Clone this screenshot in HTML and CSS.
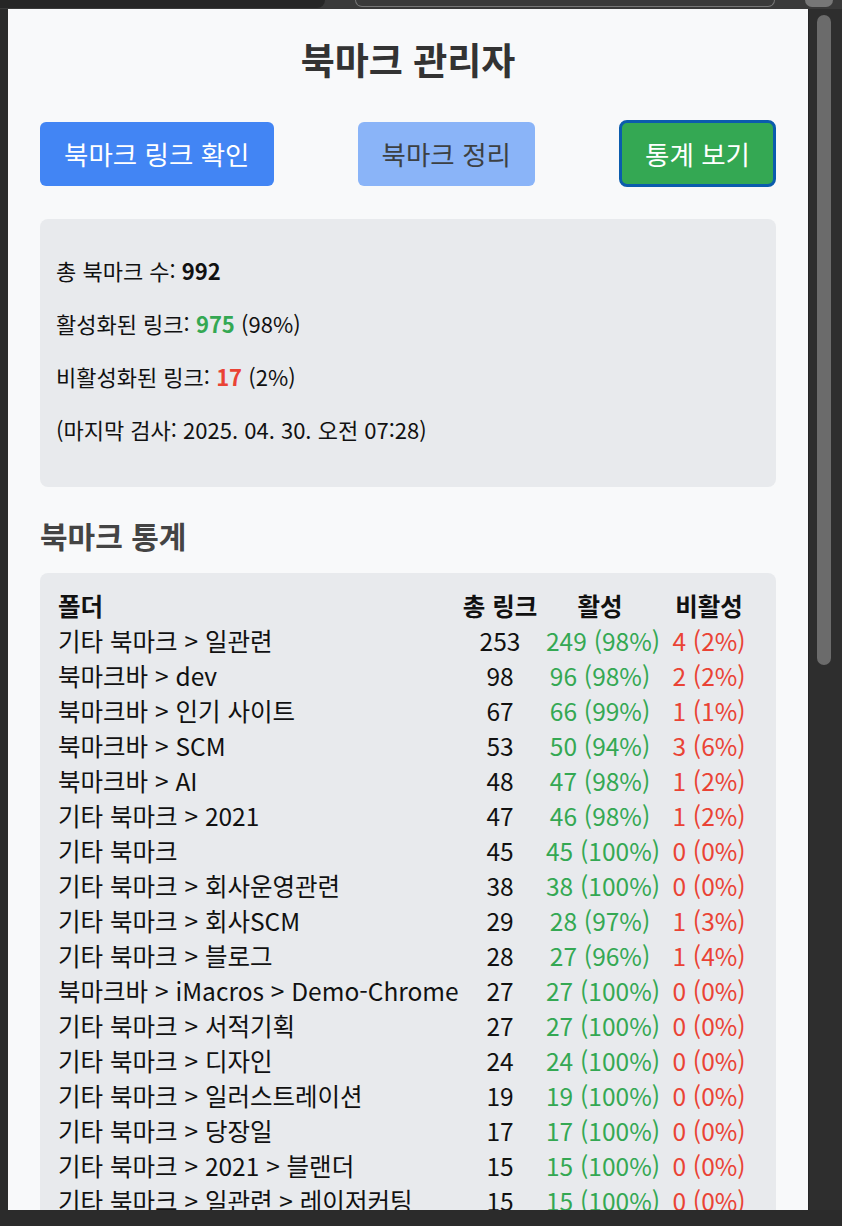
FILE: index.html
```html
<!DOCTYPE html>
<html lang="ko">
<head>
<meta charset="utf-8">
<title>북마크 관리자</title>
<link rel="stylesheet" href="styles.css">
</head>
<body>
<div class="window">
  <div class="topbar">
    <div class="tab-dark"></div>
    <div class="tab-outline"></div>
    <div class="avatar"></div>
  </div>
  <div class="main">
    <div class="gutter"></div>
    <div class="popup">
      <h1 class="title">북마크 관리자</h1>
      <div class="actions">
        <button class="btn btn-check">북마크 링크 확인</button>
        <button class="btn btn-clean">북마크 정리</button>
        <button class="btn btn-stats">통계 보기</button>
      </div>
      <div class="summary">
        <p>총 북마크 수: <strong>992</strong></p>
        <p>활성화된 링크: <strong class="ok">975</strong> (98%)</p>
        <p>비활성화된 링크: <strong class="bad">17</strong> (2%)</p>
        <p>(마지막 검사: 2025. 04. 30. 오전 07:28)</p>
      </div>
      <h2 class="section-title">북마크 통계</h2>
      <div class="stats-box">
        <table class="stats">
          <colgroup>
            <col class="c-folder"><col class="c-total"><col class="c-active"><col class="c-inactive">
          </colgroup>
          <thead>
            <tr><th class="folder">폴더</th><th>총 링크</th><th>활성</th><th>비활성</th></tr>
          </thead>
          <tbody>
            <tr><td class="folder">기타 북마크 &gt; 일관련</td><td>253</td><td class="ok">249 (98%)</td><td class="bad">4 (2%)</td></tr>
            <tr><td class="folder">북마크바 &gt; dev</td><td>98</td><td class="ok">96 (98%)</td><td class="bad">2 (2%)</td></tr>
            <tr><td class="folder">북마크바 &gt; 인기 사이트</td><td>67</td><td class="ok">66 (99%)</td><td class="bad">1 (1%)</td></tr>
            <tr><td class="folder">북마크바 &gt; SCM</td><td>53</td><td class="ok">50 (94%)</td><td class="bad">3 (6%)</td></tr>
            <tr><td class="folder">북마크바 &gt; AI</td><td>48</td><td class="ok">47 (98%)</td><td class="bad">1 (2%)</td></tr>
            <tr><td class="folder">기타 북마크 &gt; 2021</td><td>47</td><td class="ok">46 (98%)</td><td class="bad">1 (2%)</td></tr>
            <tr><td class="folder">기타 북마크</td><td>45</td><td class="ok">45 (100%)</td><td class="bad">0 (0%)</td></tr>
            <tr><td class="folder">기타 북마크 &gt; 회사운영관련</td><td>38</td><td class="ok">38 (100%)</td><td class="bad">0 (0%)</td></tr>
            <tr><td class="folder">기타 북마크 &gt; 회사SCM</td><td>29</td><td class="ok">28 (97%)</td><td class="bad">1 (3%)</td></tr>
            <tr><td class="folder">기타 북마크 &gt; 블로그</td><td>28</td><td class="ok">27 (96%)</td><td class="bad">1 (4%)</td></tr>
            <tr><td class="folder">북마크바 &gt; iMacros &gt; Demo-Chrome</td><td>27</td><td class="ok">27 (100%)</td><td class="bad">0 (0%)</td></tr>
            <tr><td class="folder">기타 북마크 &gt; 서적기획</td><td>27</td><td class="ok">27 (100%)</td><td class="bad">0 (0%)</td></tr>
            <tr><td class="folder">기타 북마크 &gt; 디자인</td><td>24</td><td class="ok">24 (100%)</td><td class="bad">0 (0%)</td></tr>
            <tr><td class="folder">기타 북마크 &gt; 일러스트레이션</td><td>19</td><td class="ok">19 (100%)</td><td class="bad">0 (0%)</td></tr>
            <tr><td class="folder">기타 북마크 &gt; 당장일</td><td>17</td><td class="ok">17 (100%)</td><td class="bad">0 (0%)</td></tr>
            <tr><td class="folder">기타 북마크 &gt; 2021 &gt; 블랜더</td><td>15</td><td class="ok">15 (100%)</td><td class="bad">0 (0%)</td></tr>
            <tr><td class="folder">기타 북마크 &gt; 일관련 &gt; 레이저커팅</td><td>15</td><td class="ok">15 (100%)</td><td class="bad">0 (0%)</td></tr>
          </tbody>
        </table>
      </div>
    </div>
    <div class="scrollbar"><div class="thumb"></div></div>
  </div>
  <div class="bottombar"></div>
</div>
</body>
</html>
```
FILE: styles.css
```css
* { box-sizing: border-box; }
html, body {
  margin: 0;
  padding: 0;
  width: 842px;
  height: 1226px;
  overflow: hidden;
  background: #2b2b2b;
  font-family: "Noto Sans CJK KR", "Noto Sans", sans-serif;
}
.window {
  display: flex;
  flex-direction: column;
  height: 1226px;
}
.topbar {
  height: 9px;
  background: #3a3a3a;
  display: flex;
  align-items: flex-start;
}
.tab-dark {
  width: 325px;
  height: 8px;
  background: #262626;
  border-bottom-right-radius: 8px;
}
.tab-outline {
  margin-left: 30px;
  width: 420px;
  height: 7px;
  border: 1px solid #777;
  border-top: none;
  border-radius: 0 0 10px 10px;
}
.avatar {
  margin-left: 30px;
  width: 28px;
  height: 7px;
  background: #777;
  border-radius: 0 0 14px 14px;
}
.main {
  display: flex;
  height: 1201px;
}
.gutter {
  width: 8px;
  background: #2b2b2b;
}
.popup {
  width: 800px;
  height: 1201px;
  overflow: hidden;
  background: #f8f9fa;
  padding: 27px 32px 0 32px;
  color: #222;
}
.scrollbar {
  flex: 1;
  background: #2e2e2e;
  border-left: 1px solid #262626;
  padding: 6px 0 0 8px;
}
.thumb {
  width: 14px;
  height: 650px;
  background: #6b6b6b;
  border-radius: 7px;
}
.bottombar {
  flex: 1;
  background: #2b2b2b;
}
.title {
  margin: 0;
  text-align: center;
  font-size: 37px;
  line-height: 46px;
  font-weight: 700;
  color: #333;
}
.actions {
  margin-top: 38px;
  display: flex;
  justify-content: space-between;
  align-items: center;
}
.btn {
  font-family: inherit;
  height: 64px;
  padding: 0 24px;
  font-size: 26.5px;
  border: none;
  border-radius: 6px;
  color: #fff;
}
.btn-check { background: #4285f4; }
.btn-clean { background: #8ab4f8; color: #3c4043; }
.btn-stats {
  background: #34a853;
  border: 3px solid #0b5cad;
  border-radius: 8px;
  height: 67px;
  padding: 0 23px;
}
.summary {
  margin-top: 32px;
  background: #e8eaed;
  border-radius: 8px;
  padding: 15px 16px 21px 16px;
  font-size: 22px;
  line-height: 33px;
  color: #111;
}
.summary p { margin: 20px 0; }
.summary strong { font-weight: 700; }
.ok { color: #34a853; }
.bad { color: #ea4335; }
.section-title {
  margin: 29px 0 0 0;
  font-size: 30px;
  line-height: 38px;
  font-weight: 700;
  color: #444;
}
.stats-box {
  margin-top: 19px;
  background: #e8eaed;
  border-radius: 8px;
  padding: 15px 0 0 16px;
  height: 700px;
}
.stats {
  border-collapse: collapse;
  table-layout: fixed;
  width: 706px;
  font-size: 24.5px;
  line-height: 35px;
  color: #111;
}
.c-folder { width: 400px; }
.c-total { width: 88px; }
.c-active { width: 112px; }
.c-inactive { width: 106px; }
.stats th, .stats td {
  padding: 0 2px;
  text-align: center;
  white-space: nowrap;
}
.stats th { font-weight: 700; }
.stats .folder { text-align: left; }
```
